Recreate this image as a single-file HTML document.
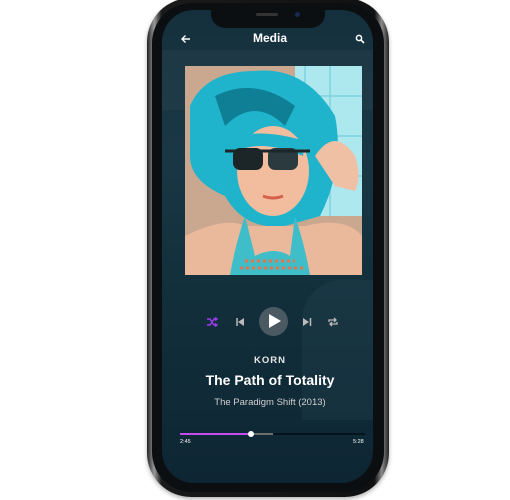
<!DOCTYPE html>
<html><head><style>
html,body{margin:0;padding:0;background:#fff;width:510px;height:500px;overflow:hidden;font-family:"Liberation Sans",sans-serif}
.phone{position:absolute;left:147px;top:-2px;width:242px;height:499px;border-radius:44px;background:linear-gradient(90deg,#222 0%,#9a9a9a 3%,#1a1a1a 6%,#111 94%,#8a8a8a 97%,#222 100%);box-shadow:0 2px 4px rgba(0,0,0,.3)}
.bez{position:absolute;left:5px;top:5px;right:5px;bottom:5px;border-radius:40px;background:#0b0f12}
.screen{position:absolute;left:162px;top:10px;width:211px;height:473px;border-radius:32px;overflow:hidden;background:linear-gradient(180deg,#15303d 0%,#1a3745 30%,#13303d 55%,#0e2633 100%)}
.notch{position:absolute;left:211px;top:8px;width:114px;height:20px;background:#0b0f12;border-radius:0 0 14px 14px}
.t{position:absolute;color:#fff;text-align:center;font-weight:bold}
</style></head><body>
<div class="phone"><div class="bez"></div></div>
<div class="screen">
  <div style="position:absolute;left:140px;top:270px;width:90px;height:140px;background:rgba(120,150,165,.07);border-radius:40px 0 0 0"></div>
  <div style="position:absolute;left:0;top:40px;width:211px;height:60px;background:rgba(255,255,255,.03)"></div>
</div>
<div class="notch"></div>
<div style="position:absolute;left:256px;top:13px;width:22px;height:3px;border-radius:2px;background:#333"></div>
<div style="position:absolute;left:295px;top:12px;width:5px;height:5px;border-radius:50%;background:#1a2a55"></div>
<svg style="position:absolute;left:180px;top:33px" width="12" height="12" viewBox="0 0 12 12"><path d="M10 6H2M5.5 2.5L2 6l3.5 3.5" stroke="#fff" stroke-width="1.4" fill="none"/></svg>
<div class="t" style="left:230px;top:31px;width:80px;font-size:12px">Media</div>
<svg style="position:absolute;left:355px;top:34px" width="10" height="10" viewBox="0 0 10 10"><circle cx="4" cy="4" r="2.6" stroke="#fff" stroke-width="1.5" fill="none"/><path d="M6 6l3 3" stroke="#fff" stroke-width="1.6"/></svg>
<svg style="position:absolute;left:185px;top:66px" width="177" height="209" viewBox="0 0 177 209">
  <rect width="177" height="209" fill="#c9a88f"/>
  <rect x="110" y="0" width="67" height="150" fill="#aee8ef"/>
  <path d="M120 0V150M145 0V150M110 30H177M110 70H177M110 110H177" stroke="#7fd3df" stroke-width="1.5"/>
  <path d="M5 40 Q20 5 70 5 Q120 0 150 50 Q160 100 135 150 L100 160 Q60 165 40 130 Q5 115 5 90Z" fill="#1fb3cc"/>
  <path d="M30 30 Q70 10 110 40 L100 60 Q70 30 40 60Z" fill="#0e7f95"/>
  <ellipse cx="88" cy="105" rx="36" ry="45" fill="#f1bd9e"/>
  <path d="M40 75 Q70 60 120 75 L118 90 Q70 70 45 90Z" fill="#1fb3cc"/>
  <rect x="48" y="82" width="30" height="22" rx="7" fill="#1c2528"/>
  <rect x="83" y="82" width="30" height="22" rx="7" fill="#2a3a3f"/>
  <path d="M40 85H125" stroke="#1c2528" stroke-width="3"/>
  <path d="M130 90 Q150 60 170 90 Q177 110 170 125 L150 120Z" fill="#f0c0a5"/>
  <path d="M78 130 Q88 134 98 130" stroke="#d5614a" stroke-width="3" fill="none"/>
  <path d="M0 170 Q40 150 60 160 L120 160 Q160 150 177 170 V209H0Z" fill="#eab89b"/>
  <path d="M45 209 Q50 180 60 150 L70 190 Q90 180 105 190 L110 150 Q120 180 125 209Z" fill="#3fbdc8"/>
  <path d="M60 195 h50 M55 202 h65" stroke="#e8734a" stroke-width="3" stroke-dasharray="3 3"/>
</svg>
<svg style="position:absolute;left:206px;top:317px" width="12" height="10" viewBox="0 0 12 10"><path d="M1 2h3l4 6h3M1 8h3l4-6h3M9 0.5l2 1.5-2 1.5M9 6.5l2 1.5-2 1.5" stroke="#9b3cf0" stroke-width="1.4" fill="none"/></svg>
<svg style="position:absolute;left:235px;top:317px" width="10" height="10" viewBox="0 0 10 10"><path d="M2 1v8" stroke="#bbb" stroke-width="1.5"/><path d="M9 1v8L3 5z" fill="#bbb"/></svg>
<div style="position:absolute;left:259px;top:307px;width:29px;height:29px;border-radius:50%;background:#4b5a62"></div>
<svg style="position:absolute;left:268px;top:313px" width="14" height="16" viewBox="0 0 14 16"><path d="M1 1v14l12-7z" fill="#fff"/></svg>
<svg style="position:absolute;left:302px;top:317px" width="10" height="10" viewBox="0 0 10 10"><path d="M1 1v8l6-4z" fill="#bbb"/><path d="M8.5 1v8" stroke="#bbb" stroke-width="1.5"/></svg>
<svg style="position:absolute;left:327px;top:317px" width="12" height="10" viewBox="0 0 12 10"><path d="M2 5V3h7M7 1l2 2-2 2M10 5v2H3M5 9L3 7l2-2" stroke="#bbb" stroke-width="1.3" fill="none"/></svg>
<div class="t" style="left:230px;top:355px;width:80px;font-size:9.5px;letter-spacing:1px;color:#e6e6e6">KORN</div>
<div class="t" style="left:180px;top:372px;width:180px;font-size:14px">The Path of Totality</div>
<div class="t" style="left:190px;top:397px;width:160px;font-size:9.5px;font-weight:normal;color:#d0d0d0">The Paradigm Shift (2013)</div>
<div style="position:absolute;left:180px;top:433px;width:185px;height:1.5px;background:#05141c"></div>
<div style="position:absolute;left:180px;top:433px;width:93px;height:1.5px;background:#6e6e6e"></div>
<div style="position:absolute;left:180px;top:433px;width:71px;height:2px;background:#c24cf0"></div>
<div style="position:absolute;left:248px;top:431px;width:6px;height:6px;border-radius:50%;background:#fff"></div>
<div class="t" style="left:180px;top:439px;font-size:5.5px;font-weight:normal">2:45</div>
<div class="t" style="left:353px;top:439px;font-size:5.5px;font-weight:normal">5:28</div>
</body></html>
